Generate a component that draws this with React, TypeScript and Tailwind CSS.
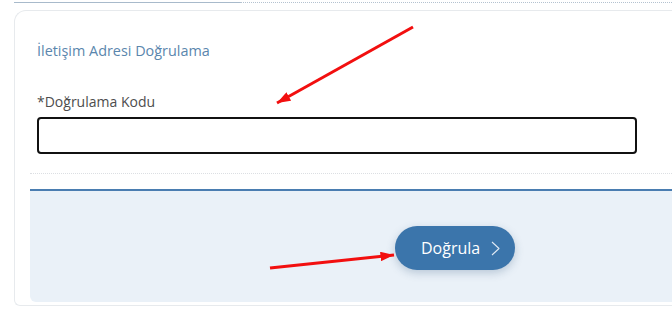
const Arrows = () => (
  <svg
    className="pointer-events-none absolute left-0 top-0"
    width="672"
    height="309"
    viewBox="0 0 672 309"
  >
    <defs>
      <marker
        id="head"
        markerWidth="4.5"
        markerHeight="3.2"
        refX="4.5"
        refY="1.6"
        orient="auto"
        markerUnits="strokeWidth"
      >
        <path d="M0,0 L4.5,1.6 L0,3.2 Z" fill="#f20f0f" />
      </marker>
    </defs>
    <line
      x1="413"
      y1="27"
      x2="277"
      y2="103"
      stroke="#f20f0f"
      strokeWidth="3"
      markerEnd="url(#head)"
    />
    <line
      x1="270"
      y1="268"
      x2="394"
      y2="255"
      stroke="#f20f0f"
      strokeWidth="3"
      markerEnd="url(#head)"
    />
  </svg>
);

export default function App() {
  return (
    <div
      className="relative h-[309px] w-[672px] overflow-hidden bg-white"
      style={{ fontFamily: '"Open Sans", "Noto Sans", sans-serif' }}
    >
      {/* Tab underline */}
      <div className="flex pl-[14px] pt-[2px]">
        <div className="h-[1px] w-[226px] bg-[#a8bacb]" />
        <div className="h-0 flex-1 border-t border-dotted border-[#b4c2d0]" />
      </div>

      {/* Card */}
      <div className="ml-[14px] mt-[7px] h-[296px] rounded-tl-xl rounded-bl-md border border-r-0 border-[#e7eaed] pl-[15px] pt-[28px]">
        <div className="pl-[7px] pr-[35px]">
          <h2 className="text-[14.4px] leading-[24px] text-[#5a86ad]">
            İletişim Adresi Doğrulama
          </h2>
          <label className="mt-[29px] block text-[14px] leading-[20px] text-[#4d4d4d]">
            *Doğrulama Kodu
          </label>
          <input
            type="text"
            className="mt-[5px] block h-[37px] w-full rounded-[4px] border-2 border-[#111] bg-white px-2 text-[14px] outline-none"
          />
        </div>

        <div className="mt-[19px] border-t border-dotted border-[#dcdfe3]" />

        {/* Footer panel */}
        <div className="mt-[15px] flex h-[113px] items-start rounded-bl-md border-t-2 border-[#4a7db1] bg-[#eaf1f8] pl-[365px] pt-[35px]">
          <button className="flex h-[44px] items-center gap-[11px] rounded-full bg-[#3b75ab] pl-[26px] pr-[15px] text-[16px] font-normal text-white shadow-[0_3px_8px_rgba(40,80,120,0.25)]">
            Doğrula
            <svg width="9" height="15" viewBox="0 0 9 15" fill="none">
              <polyline
                points="1,1 8,7.5 1,14"
                stroke="#dfe9f3"
                strokeWidth="1.1"
                strokeLinejoin="round"
              />
            </svg>
          </button>
        </div>
      </div>

      <Arrows />
    </div>
  );
}
